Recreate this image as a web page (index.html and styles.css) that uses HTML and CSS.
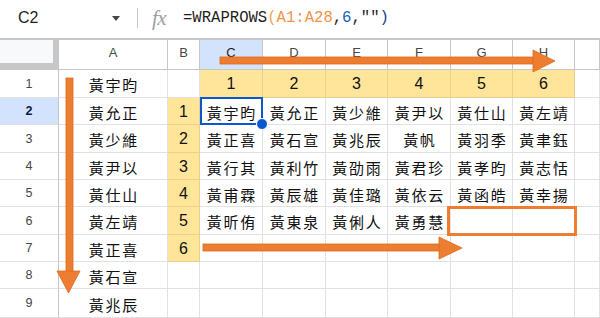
FILE: index.html
```html
<!DOCTYPE html>
<html lang="zh-Hant">
<head>
<meta charset="utf-8">
<link rel="stylesheet" href="styles.css">
</head>
<body>
<div class="page">
  <div class="fbar">
    <span class="namebox">C2</span>
    <span class="caret"></span>
    <span class="sep"></span>
    <span class="fx">fx</span>
    <span class="formula"><span class="f-fn">=WRAPROWS</span><span class="f-par">(</span><span class="f-ref">A1:A28</span><span class="f-pun">,</span><span class="f-num">6</span><span class="f-pun">,</span><span class="f-str">""</span><span class="f-par2">)</span></span>
  </div>
  <div class="sheet">
    <div class="corner"><div class="corner-in"></div></div>
    <div class="ch">A</div><div class="ch">B</div><div class="ch sel">C</div><div class="ch">D</div><div class="ch">E</div><div class="ch">F</div><div class="ch">G</div><div class="ch">H</div><div class="ch"></div>

    <div class="rh">1</div><div class="c">黃宇昀</div><div class="c"></div><div class="c y n">1</div><div class="c y n">2</div><div class="c y n">3</div><div class="c y n">4</div><div class="c y n">5</div><div class="c y n">6</div><div class="c"></div>

    <div class="rh sel">2</div><div class="c">黃允正</div><div class="c y n">1</div><div class="c active">黃宇昀</div><div class="c">黃允正</div><div class="c">黃少維</div><div class="c">黃尹以</div><div class="c">黃仕山</div><div class="c">黃左靖</div><div class="c"></div>

    <div class="rh">3</div><div class="c">黃少維</div><div class="c y n">2</div><div class="c">黃正喜</div><div class="c">黃石宣</div><div class="c">黃兆辰</div><div class="c">黃帆</div><div class="c">黃羽季</div><div class="c">黃聿鈺</div><div class="c"></div>

    <div class="rh">4</div><div class="c">黃尹以</div><div class="c y n">3</div><div class="c">黃行其</div><div class="c">黃利竹</div><div class="c">黃劭雨</div><div class="c">黃君珍</div><div class="c">黃孝昀</div><div class="c">黃志恬</div><div class="c"></div>

    <div class="rh">5</div><div class="c">黃仕山</div><div class="c y n">4</div><div class="c">黃甫霖</div><div class="c">黃辰雄</div><div class="c">黃佳璐</div><div class="c">黃依云</div><div class="c">黃函皓</div><div class="c">黃幸揚</div><div class="c"></div>

    <div class="rh">6</div><div class="c">黃左靖</div><div class="c y n">5</div><div class="c">黃昕侑</div><div class="c">黃東泉</div><div class="c">黃俐人</div><div class="c">黃勇慧</div><div class="c"></div><div class="c"></div><div class="c"></div>

    <div class="rh">7</div><div class="c">黃正喜</div><div class="c y n">6</div><div class="c"></div><div class="c"></div><div class="c"></div><div class="c"></div><div class="c"></div><div class="c"></div><div class="c"></div>

    <div class="rh">8</div><div class="c">黃石宣</div><div class="c"></div><div class="c"></div><div class="c"></div><div class="c"></div><div class="c"></div><div class="c"></div><div class="c"></div><div class="c"></div>

    <div class="rh">9</div><div class="c">黃兆辰</div><div class="c"></div><div class="c"></div><div class="c"></div><div class="c"></div><div class="c"></div><div class="c"></div><div class="c"></div><div class="c"></div>
  </div>
  <div class="empty-box"></div>
  <svg class="arrows" width="600" height="318" viewBox="0 0 600 318">
    <g fill="#ed7d31" stroke="#dd6a1c" stroke-width="0.8">
      <rect x="66" y="78" width="7" height="194"/>
      <polygon points="57,271 80,271 68.5,293"/>
      <rect x="220" y="57" width="314" height="7"/>
      <polygon points="533,50 533,72 555,61"/>
      <rect x="203" y="244" width="237" height="7"/>
      <polygon points="439,237 439,259 462,248"/>
    </g>
  </svg>
</div>
</body>
</html>
```

FILE: styles.css
```css
* { box-sizing: border-box; }
html, body { margin: 0; padding: 0; background: #fff; }
body { width: 600px; height: 318px; overflow: hidden; }
.page { position: relative; width: 600px; height: 318px; overflow: hidden; }

.fbar {
  height: 40px;
  border-bottom: 2px solid #c7c7c7;
  display: flex;
  align-items: center;
  padding-bottom: 2px;
  font-family: "Liberation Sans", Arial, sans-serif;
}
.namebox { margin-left: 18px; width: 90px; font-size: 16px; color: #1f1f1f; }
.caret {
  width: 0; height: 0;
  margin-left: 4px;
  border-left: 4.5px solid transparent;
  border-right: 4.5px solid transparent;
  border-top: 5px solid #444746;
}
.sep { width: 1px; height: 20px; background: #c4c7c5; margin-left: 17px; }
.fx {
  margin-left: 14px;
  font-family: "Liberation Serif", serif;
  font-style: italic;
  font-size: 21px;
  color: #9aa0a6;
  letter-spacing: -0.5px;
  width: 31px;
}
.formula { font-family: "Liberation Mono", monospace; font-size: 15.6px; color: #1f1f1f; }
.f-par { color: #f4a54a; }
.f-ref { color: #f0934a; }
.f-pun { color: #1f1f1f; }
.f-num { color: #1a5fb4; }
.f-str { color: #1f1f1f; }
.f-par2 { color: #1a3d8f; }

.sheet {
  display: grid;
  grid-template-columns: 59px 109px 32px 63px 63px 62px 63px 62px 62px 25px;
  grid-template-rows: 30px 28px 27px 28px 27px 27px 28px 27px 27px 29px;
}
.corner { background: #c7c7c7; border-right: 1px solid #c4c7c5; }
.corner-in { width: 53px; height: 23px; background: #f8f9fa; }

.ch {
  border-right: 1px solid #c4c7c5;
  border-bottom: 1px solid #c4c7c5;
  display: flex; align-items: center; justify-content: center;
  padding-bottom: 5px;
  font-family: "Liberation Sans", Arial, sans-serif;
  font-size: 13px;
  color: #444746;
}
.rh {
  border-right: 1px solid #c4c7c5;
  border-bottom: 1px solid #e1e1e1;
  display: flex; align-items: center; justify-content: center;
  font-family: "Liberation Sans", Arial, sans-serif;
  font-size: 12.5px;
  color: #444746;
}
.sel { background: #d3e3fd; color: #0b1f3f; font-weight: bold; }
.ch.sel { font-weight: normal; color: #1f1f1f; }

.c {
  border-right: 1px solid #e1e1e1;
  border-bottom: 1px solid #e1e1e1;
  display: flex; align-items: center; justify-content: center;
  padding-top: 2px;
  font-family: "Noto Sans CJK TC", "Noto Sans CJK SC", sans-serif;
  font-size: 15px;
  letter-spacing: 1.7px;
  text-indent: 1.7px;
  color: #111;
  white-space: nowrap;
}
.y { background: #ffe599; border-right-color: #e9d08c; border-bottom-color: #e9d08c; }
.n { font-family: "Liberation Sans", Arial, sans-serif; font-size: 16px; letter-spacing: 0; text-indent: 0; padding-top: 1px; }

.active { position: relative; }
.active::after {
  content: "";
  position: absolute;
  left: 0; top: -1px; right: -1px; bottom: -1px;
  border: 2px solid #0b57d0;
}
.active::before {
  content: "";
  position: absolute;
  right: -6px; bottom: -6px;
  width: 10px; height: 10px;
  border-radius: 50%;
  background: #0b57d0;
  border: 1px solid #fff;
  z-index: 2;
}

.empty-box {
  position: absolute;
  left: 447px; top: 206px;
  width: 130px; height: 30px;
  border: 3px solid #ed7d31;
}
.arrows { position: absolute; left: 0; top: 0; pointer-events: none; }
```
